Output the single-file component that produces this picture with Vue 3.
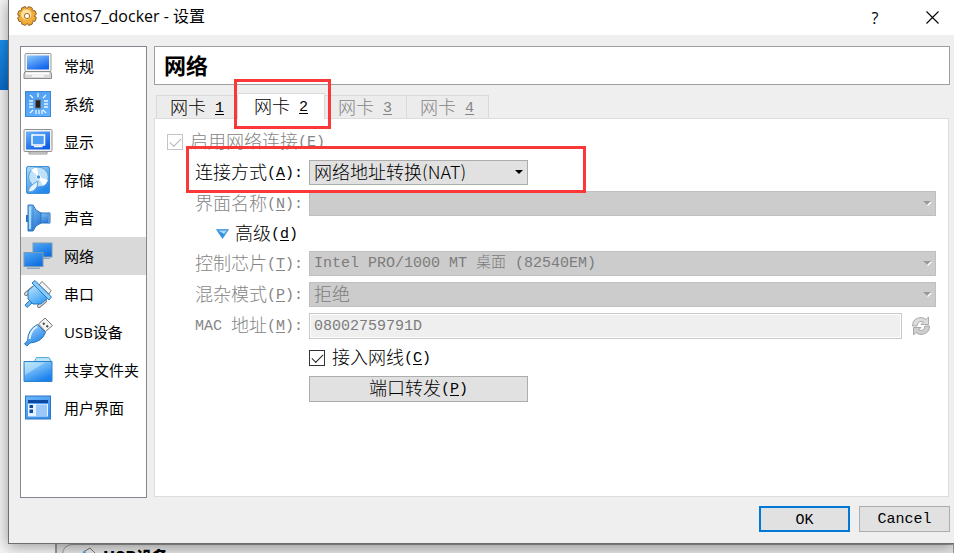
<template>
  <div class="desktop">
    <div class="backdrop">
      <span class="backdrop-item"></span>
      <div class="backdrop-group">
        <div class="backdrop-card">
          <svg width="18" height="18" viewBox="0 0 18 18">
            <path d="M1 13 L6 4 L11 1 L17 7 L13 13 Z" fill="#e8e8e8" stroke="#777" />
            <path d="M1 13 L5 3 L9 9 Z" fill="#4ba3dc" />
          </svg>
          <b>USB设备</b>
        </div>
      </div>
    </div>

    <div class="dialog">
      <header class="title-bar">
        <svg class="app-icon" width="20" height="20" viewBox="0 0 20 20">
          <g fill="#f0a830" stroke="#8a5a1c" stroke-width="0.9">
            <rect
              v-for="n in 4"
              :key="n"
              x="7.6"
              y="0.6"
              width="4.8"
              height="18.8"
              rx="1.4"
              :transform="`rotate(${n * 45 + 22} 10 10)`"
            />
          </g>
          <circle cx="10" cy="10" r="7.4" fill="#f3ae3c" />
          <circle cx="9.2" cy="8.4" r="5.2" fill="#fde0a0" />
          <circle cx="10" cy="10" r="2.6" fill="#fff" stroke="#a86c1d" />
        </svg>
        <h1>centos7_docker - 设置</h1>
        <button class="title-btn" aria-label="帮助">?</button>
        <button class="title-btn" aria-label="关闭">
          <svg width="13" height="13" viewBox="0 0 13 13">
            <path d="M0.5 0.5 L12.5 12.5 M12.5 0.5 L0.5 12.5" stroke="#000" stroke-width="1.1" />
          </svg>
        </button>
      </header>

      <div class="dialog-body">
        <nav class="sidebar">
          <button
            v-for="item in sections"
            :key="item.id"
            class="nav-item"
            :class="{ active: item.id === section }"
            @click="section = item.id"
          >
            <svg class="nav-icon" width="30" height="30" viewBox="0 0 30 30">
              <defs>
                <linearGradient :id="'blue-' + item.id" x1="0" y1="0" x2="0.6" y2="1">
                  <stop offset="0" :stop-color="item.from" />
                  <stop offset="1" :stop-color="item.to" />
                </linearGradient>
              </defs>
              <g v-if="item.id === 'general'">
                <rect x="2" y="2.5" width="26" height="18" rx="1" fill="#f4f4f4" stroke="#999" />
                <rect x="4" y="4.5" width="22" height="14" :fill="`url(#blue-${item.id})`" />
                <path d="M2 20.5 H27.5 L28.5 23 V27.5 H1 V23 Z" fill="#d8d8d8" stroke="#8b8b8b" />
                <path d="M3 22.5 H26" stroke="#fff" stroke-width="2" />
                <path d="M9 25 H21" stroke="#fff" stroke-width="1.5" />
              </g>
              <g v-else-if="item.id === 'system'">
                <rect x="2.5" y="2.5" width="25" height="25" :fill="`url(#blue-${item.id})`" stroke="#3c86d2" />
                <rect x="12.5" y="11" width="5" height="8" fill="#222" stroke="#666" />
                <path
                  d="M15 4 V8 M20 9 L23 6 M21 12 H25 M21 15 H25 M21 18 H25 M20 21 L23 24 M13 21 V25 M16 21 V25 M19 21 V25 M10 21 L7 24 M6 12 H10 M6 15 H10 M6 18 H10 M10 9 L7 6"
                  stroke="#e8f5ff"
                  stroke-width="1.3"
                />
              </g>
              <g v-else-if="item.id === 'display'">
                <rect x="1" y="2.5" width="28" height="22" rx="1" fill="#f4f4f4" stroke="#8f8f8f" />
                <rect x="3" y="4.5" width="24" height="18" :fill="`url(#blue-${item.id})`" />
                <path d="M9 8 H21.5 V18 H9 Z" fill="#4a9cf4" stroke="#fff" stroke-width="1.5" />
                <path d="M11 19.5 H19.5" stroke="#fff" stroke-width="1.5" />
                <path d="M6 25 H24 V27 H6 Z" fill="#e4e4e4" stroke="#999" />
              </g>
              <g v-else-if="item.id === 'storage'">
                <rect x="3.5" y="1.5" width="23" height="27" rx="1.5" :fill="`url(#blue-${item.id})`" stroke="#3f8fd6" />
                <circle cx="15.5" cy="12" r="9.8" fill="#bfe2fb" stroke="#5f9fd6" />
                <path d="M15.5 12 L8 5 A10 10 0 0 1 14 2.5 Z M15.5 12 L25 15 A10 10 0 0 1 20 21 Z" fill="#fff" />
                <circle cx="15.5" cy="12" r="2.2" fill="#3c92db" stroke="#fff" />
                <path d="M5.5 25.5 Q6 21 15 16 L14 22 Q11 27 6.5 27 Z" fill="#e9f5fd" stroke="#5a9fd6" />
              </g>
              <g v-else-if="item.id === 'audio'">
                <path d="M16 10 H27 V20 H16 Z" :fill="`url(#blue-${item.id})`" stroke="#2d73ba" />
                <path d="M26 9.5 V20.5" stroke="#5c9bd8" stroke-width="2" />
                <path d="M4 12 V19" stroke="#2d73ba" stroke-width="2" />
                <path d="M5 2 H10 Q12 8 18 10 V20 Q12 22 10 28 H5 Z" :fill="`url(#blue-${item.id})`" stroke="#2d73ba" />
                <path d="M10 3 V27" stroke="#2d73ba" stroke-width="0.6" />
                <path d="M7 4 V26" stroke="#a8dafc" stroke-width="2" />
              </g>
              <g v-else-if="item.id === 'network'">
                <rect x="10" y="2" width="19" height="14" :fill="`url(#blue-${item.id})`" stroke="#7d9ab4" />
                <path d="M20 17 H27 V18 H20 Z" fill="#8aa7c0" />
                <rect x="1" y="11.5" width="19" height="14" :fill="`url(#blue-${item.id})`" stroke="#7d9ab4" />
                <path d="M4 26.5 H17 V28 H4 Z" fill="#8aa7c0" />
              </g>
              <g v-else-if="item.id === 'serial'">
                <path d="M16 6 L19 2.5 L28 11.5 L26 15 Z" fill="#f6f6f6" stroke="#777" />
                <path d="M3 15 L10 9 M16 27 L22 22" stroke="#777" stroke-width="4" stroke-linecap="round" />
                <path d="M3 15 L10 9 M16 27 L22 22" stroke="#e6e6e6" stroke-width="2" stroke-linecap="round" />
                <path d="M7 21 L2 26 L4 28.5 L9 24" fill="#6bbcf6" stroke="#2a78be" />
                <path d="M11.5 6 L5 12 V20 L10 25 L18 25 L25 19 Z" :fill="`url(#blue-${item.id})`" stroke="#2a78be" />
                <path d="M9 4 L12 1.5 L28.5 18 L26 21 Z" fill="#86ccf8" stroke="#2a78be" />
              </g>
              <g v-else-if="item.id === 'usb'">
                <path d="M15.5 7 L22 1 L29.5 8.5 L22.5 14.5 Z" fill="#f3f3f3" stroke="#777" />
                <path d="M20 6 L21.5 7.5 M23.5 8.5 L25 10" stroke="#444" stroke-width="1.8" />
                <path d="M14.5 7.5 L22.5 15.5 Q19 25 7 26 L4 29 L1.5 27 L4.5 23.5 Q5 12 14.5 7.5 Z" :fill="`url(#blue-${item.id})`" stroke="#2a78be" />
                <path d="M14 9.5 Q7 14 6.5 22" fill="none" stroke="#e4f4ff" stroke-width="2" />
              </g>
              <g v-else-if="item.id === 'shared'">
                <path d="M11 7 L13.5 2.5 H26 L28.5 7 V12 H11 Z" fill="#b8e4fa" stroke="#5aa9d6" />
                <path d="M1 6.5 H29 V26.5 H1 Z" :fill="`url(#blue-${item.id})`" stroke="#2d83c9" />
                <path d="M2 7.5 H22 L2 20 Z" fill="#e2f7ff" opacity="0.4" />
              </g>
              <g v-else>
                <rect x="2.5" y="3" width="25" height="23" :fill="`url(#blue-${item.id})`" stroke="#2b77c4" />
                <path d="M5 7 H25 V10 H5 Z" fill="#0c49a3" />
                <path d="M5 11 H25 V23.5 H5 Z" fill="#e6f2ff" />
                <path d="M13 11.5 H24 V23 H13 Z" fill="#9bc8fb" />
                <path d="M6.5 12 H10 V15 H6.5 Z M6.5 16.5 H10 V20 H6.5 Z" fill="#0c49a3" />
              </g>
            </svg>
            <span>{{ item.name }}</span>
          </button>
        </nav>

        <main class="content">
          <h2>网络</h2>

          <div class="tabs" role="tablist">
            <button
              v-for="n in 4"
              :key="n"
              class="tab"
              :class="{ active: n === adapter }"
              role="tab"
              :aria-selected="n === adapter"
              :disabled="n > 2"
              @click="adapter = n"
            >
              网卡<span class="key">&nbsp;<u>{{ n }}</u></span>
            </button>
          </div>

          <form class="panel" @submit.prevent>
            <label class="check disabled">
              <input v-model="form.enabled" type="checkbox" disabled />
              <span>启用网络连接<span class="key">(<u>E</u>)</span></span>
            </label>

            <div class="row marked">
              <label for="attach">连接方式<span class="key">(<u>A</u>):</span></label>
              <div class="select-box short">
                <select id="attach" v-model="form.attach">
                  <option value="nat">网络地址转换(NAT)</option>
                </select>
              </div>
            </div>

            <div class="row disabled">
              <label for="name">界面名称<span class="key">(<u>N</u>):</span></label>
              <div class="select-box">
                <select id="name" disabled></select>
              </div>
            </div>

            <button type="button" class="advanced">
              <svg width="13" height="10" viewBox="0 0 13 10">
                <path d="M0.5 0.5 H12.5 L6.5 9.5 Z" fill="#2f8fdc" stroke="#5aa3de" />
                <path d="M2 1.5 H11 L8 5 Z" fill="#a9d8f8" />
              </svg>
              <span>高级<span class="key">(<u>d</u>)</span></span>
            </button>

            <div class="row disabled">
              <label for="chip">控制芯片<span class="key">(<u>T</u>):</span></label>
              <div class="select-box">
                <select id="chip" v-model="form.chip" class="mono" disabled>
                  <option value="82540EM">Intel PRO/1000 MT 桌面 (82540EM)</option>
                </select>
              </div>
            </div>

            <div class="row disabled">
              <label for="promisc">混杂模式<span class="key">(<u>P</u>):</span></label>
              <div class="select-box">
                <select id="promisc" v-model="form.promisc" disabled>
                  <option value="deny">拒绝</option>
                </select>
              </div>
            </div>

            <div class="row disabled">
              <label for="mac"><span class="key">MAC&nbsp;</span>地址<span class="key">(<u>M</u>):</span></label>
              <div class="mac">
                <input id="mac" v-model="form.mac" class="mono" type="text" disabled />
                <button type="button" class="refresh" aria-label="刷新" disabled>
                  <svg width="20" height="20" viewBox="0 0 20 20" stroke="#9a9a9a" stroke-width="0.8">
                    <path d="M1.5 10 Q1.5 2 10 1.5 Q13 1.5 15 3.5 L17.5 1 V8.5 H10 L12.5 6 Q7 4 6 10 Z" fill="#dcdcdc" />
                    <path d="M18.5 10 Q18.5 18 10 18.5 Q7 18.5 5 16.5 L2.5 19 V11.5 H10 L7.5 14 Q13 16 14 10 Z" fill="#cfcfcf" />
                  </svg>
                </button>
              </div>
            </div>

            <div class="row">
              <span></span>
              <label class="check">
                <input v-model="form.cable" type="checkbox" />
                <span>接入网线<span class="key">(<u>C</u>)</span></span>
              </label>
            </div>

            <div class="row">
              <span></span>
              <button type="button" class="btn short">端口转发<span class="key">(<u>P</u>)</span></button>
            </div>
          </form>
        </main>
      </div>

      <footer class="actions">
        <button class="btn primary"><span class="key">OK</span></button>
        <button class="btn"><span class="key">Cancel</span></button>
      </footer>
    </div>
  </div>
</template>

<script setup>
import { reactive, ref } from "vue";

const sections = [
  { id: "general", name: "常规", from: "#8cc8fb", to: "#1468ee" },
  { id: "system", name: "系统", from: "#4a9cf2", to: "#62b0ff" },
  { id: "display", name: "显示", from: "#6ab4fa", to: "#0f5fe6" },
  { id: "storage", name: "存储", from: "#b4dcfb", to: "#2488ec" },
  { id: "audio", name: "声音", from: "#8accf8", to: "#2a78d6" },
  { id: "network", name: "网络", from: "#52a8f6", to: "#1070e0" },
  { id: "serial", name: "串口", from: "#c4e8ff", to: "#3aa0f4" },
  { id: "usb", name: "USB设备", from: "#b4e0ff", to: "#1c80e8" },
  { id: "shared", name: "共享文件夹", from: "#b0e6fd", to: "#1a80ee" },
  { id: "ui", name: "用户界面", from: "#6cb6fa", to: "#3a90ec" },
];

const section = ref("network");
const adapter = ref(2);

const form = reactive({
  enabled: true,
  attach: "nat",
  chip: "82540EM",
  promisc: "deny",
  mac: "08002759791D",
  cable: true,
});
</script>

<style>
body {
  margin: 0;
  background: #f0f0f0;
}
</style>

<style scoped>
.desktop {
  position: relative;
  box-sizing: border-box;
  min-height: 100vh;
  padding: 0 0 9px 8px;
  overflow: hidden;
  font-family: "Noto Sans CJK SC", sans-serif;
  font-size: 18px;
  font-weight: 300;
  color: #000;
}

.desktop * {
  box-sizing: border-box;
}

button,
input,
select {
  font: inherit;
  color: inherit;
}

button {
  margin: 0;
  padding: 0;
  border: none;
  background: none;
}

/* the window behind the dialog */
.backdrop {
  position: absolute;
  inset: 0;
  background: #f4f4f4;
}

.backdrop-item {
  position: absolute;
  top: 40px;
  left: 0;
  width: 12px;
  height: 50px;
  background: linear-gradient(#1c90f0, #0a6cc8);
}

.backdrop-group {
  position: absolute;
  left: 55px;
  right: 0;
  bottom: 0;
  height: 9px;
  padding-left: 5px;
  border-left: 2px solid #999;
  background: #e0e0e0;
}

.backdrop-card {
  display: flex;
  align-items: center;
  gap: 6px;
  height: 24px;
  padding-left: 16px;
  border: 1px solid #999;
  border-radius: 10px 0 0 0;
  background: #e4e4e4;
  font-size: 16px;
  font-weight: 700;
  line-height: 20px;
}

.dialog {
  position: relative;
  display: flex;
  flex-direction: column;
  min-height: calc(100vh - 9px);
  border-left: 1px solid #6e6e6e;
  border-bottom: 1px solid #6e6e6e;
  background: #efefef;
  box-shadow: 0 2px 14px rgba(0, 0, 0, 0.4);
}

.title-bar {
  display: flex;
  align-items: center;
  height: 35px;
  padding: 0 8px;
  background: #fff;
  font-family: "Open Sans", "Noto Sans CJK SC", sans-serif;
  font-size: 16px;
  font-weight: 400;
}

.app-icon {
  margin-bottom: 4px;
}

.title-bar h1 {
  flex: 1;
  margin: 0 0 4px 6px;
  font-size: 16px;
  font-weight: 400;
  line-height: 20px;
}

.title-btn {
  display: flex;
  align-items: center;
  justify-content: center;
  width: 28px;
  height: 32px;
  margin-left: 29px;
}

.dialog-body {
  display: flex;
  flex: 1;
  gap: 7px;
  padding: 11px 4px 0 11px;
}

.sidebar {
  width: 127px;
  margin-bottom: -1px;
  border: 1px solid #828790;
  background: #fff;
}

.nav-item {
  display: flex;
  align-items: center;
  gap: 11px;
  width: 100%;
  height: 38px;
  padding-left: 2px;
  font-family: "Open Sans", "Noto Sans CJK SC", sans-serif;
  font-size: 15px;
  font-weight: 400;
  line-height: 20px;
  white-space: nowrap;
}

.nav-item.active {
  background: #d9d9d9;
}

.nav-icon {
  flex: none;
}

.content {
  display: flex;
  flex: 1;
  flex-direction: column;
  min-width: 0;
}

.content h2 {
  height: 39px;
  margin: 0 0 8px;
  padding-left: 9px;
  border: 1px solid #a0a0a0;
  background: #fff;
  font-size: 22px;
  font-weight: 700;
  line-height: 34px;
}

.key,
.mono {
  font-family: "Liberation Mono", "Noto Sans CJK SC", monospace;
  font-size: 15px;
}

.key {
  line-height: 16px;
  vertical-align: 2px;
}

u {
  text-underline-offset: 2px;
}

.tabs {
  display: flex;
  align-items: flex-end;
  height: 25px;
  padding-left: 2px;
}

.tab {
  position: relative;
  height: 23px;
  padding: 0 14px 2px 13px;
  border: 1px solid #d9d9d9;
  border-bottom: none;
  border-left-width: 0;
  background: #ececec;
  line-height: 20px;
  white-space: nowrap;
}

.tab:first-child {
  padding-right: 13px;
  border-left-width: 1px;
}

.tab:disabled {
  color: #858585;
}

.tab.active {
  z-index: 1;
  height: 26px;
  margin-bottom: -1px;
  padding: 0 16px 3px;
  background: #fff;
}

/* callout frames */
.tab.active::after,
.marked::after {
  content: "";
  position: absolute;
  border: 3px solid #fb3838;
  pointer-events: none;
}

.tab.active::after {
  inset: -15px -7px -10px -4px;
}

.marked::after {
  top: -14px;
  left: 19px;
  width: 394px;
  height: 41px;
}

.panel {
  display: flex;
  flex: 1;
  flex-direction: column;
  gap: 6px;
  margin-right: 1px;
  padding: 11px 12px;
  border: 1px solid #dcdcdc;
  background: #fff;
}

.row {
  position: relative;
  display: grid;
  grid-template-columns: 136px 1fr;
  column-gap: 6px;
  align-items: center;
  min-height: 25px;
}

.marked {
  z-index: 1;
}

.row > label:first-child {
  height: 24px;
  text-align: right;
  line-height: 20px;
  white-space: nowrap;
}

.disabled {
  color: #858585;
}

.check {
  display: flex;
  align-items: center;
  gap: 7px;
  height: 24px;
  line-height: 20px;
}

.check > span {
  padding-bottom: 3px;
}

.check input {
  appearance: none;
  width: 16px;
  height: 16px;
  margin: 0;
  border: 1px solid #333;
  background: #fff;
}

.check input:checked::before {
  content: "";
  display: block;
  width: 10px;
  height: 5px;
  margin: 3px 0 0 2px;
  border: solid #222;
  border-width: 0 0 1px 1px;
  transform: rotate(-45deg);
}

.check input:disabled {
  border-color: #c4c4c4;
}

.check input:disabled::before {
  border-color: #b4b4b4;
}

.select-box {
  position: relative;
}

.select-box::after {
  content: "";
  position: absolute;
  top: 10px;
  right: 5px;
  border: 4px solid transparent;
  border-top-color: #000;
  border-bottom: none;
  pointer-events: none;
}

.disabled .select-box::after {
  border-top-color: #999;
  filter: drop-shadow(1px 1px 0 #fff);
}

select {
  display: block;
  appearance: none;
  width: 100%;
  height: 25px;
  padding: 0 4px 3px;
  border: 1px solid #adadad;
  border-radius: 0;
  background: #e1e1e1;
  line-height: 20px;
}

select.mono {
  padding-bottom: 0;
}

select:disabled {
  border-color: #bfbfbf;
  background: #ccc;
  color: #7c7c7c;
  opacity: 1;
}

.short {
  width: 219px;
}

.advanced {
  display: flex;
  align-items: center;
  align-self: flex-start;
  gap: 6px;
  height: 23px;
  margin-left: 49px;
  line-height: 20px;
}

.advanced > span {
  padding-bottom: 3px;
}

.mac {
  display: flex;
  align-items: center;
  gap: 9px;
  padding-right: 5px;
}

#mac {
  flex: 1;
  min-width: 0;
  height: 26px;
  padding: 0 4px;
  border: 1px solid #c8c8c8;
  border-radius: 0;
  outline: 1px solid #fff;
  outline-offset: -2px;
  background: #efefef;
  color: #7c7c7c;
}

.refresh {
  display: flex;
}

.btn {
  height: 26px;
  padding-bottom: 3px;
  border: 1px solid #adadad;
  background: #e1e1e1;
  line-height: 20px;
}

.btn.primary {
  border: 2px solid #0078d7;
}

.actions {
  display: flex;
  justify-content: flex-end;
  gap: 9px;
  padding: 9px 4px 11px;
}

.actions .btn {
  width: 91px;
}
</style>
